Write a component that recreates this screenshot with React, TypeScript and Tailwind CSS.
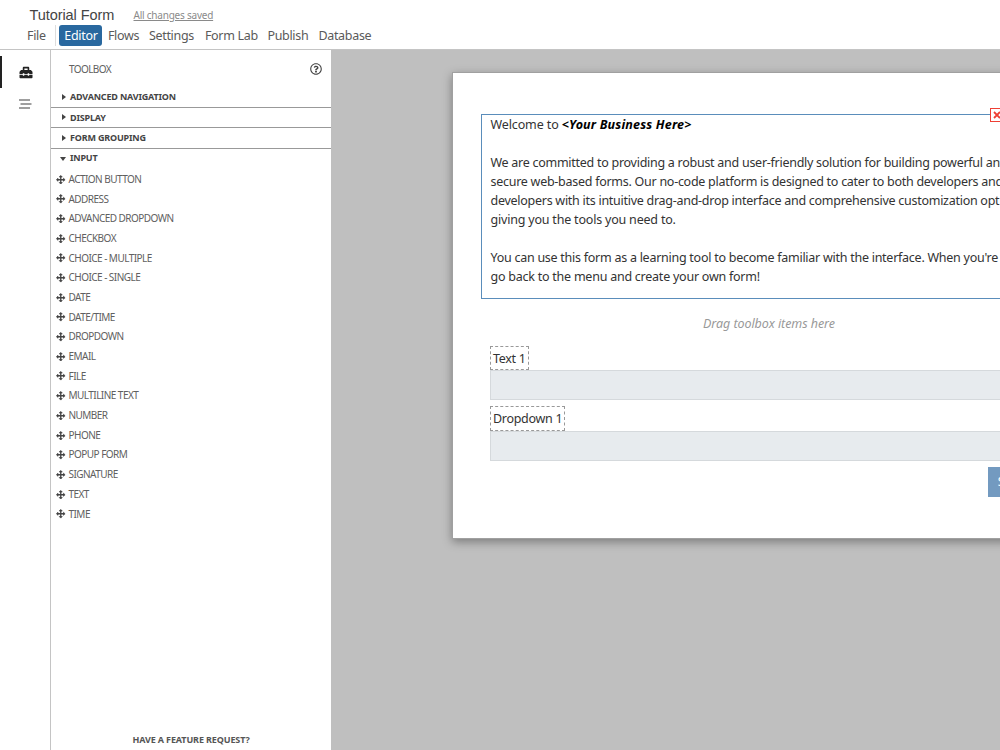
import React from 'react';
import { FaRegQuestionCircle, FaToolbox } from 'react-icons/fa';

const menuItems = [
  { label: 'Flows', className: 'ml-[5.5px] w-[31px]' },
  { label: 'Settings', className: 'ml-[10px] w-[46px]' },
  { label: 'Form Lab', className: 'ml-[10px] w-[53px]' },
  { label: 'Publish', className: 'ml-[9.5px] w-[41px]' },
  { label: 'Database', className: 'ml-[10px] w-[53px]' },
];

const collapsedGroups = ['ADVANCED NAVIGATION', 'DISPLAY', 'FORM GROUPING'];

const inputItems = [
  'ACTION BUTTON',
  'ADDRESS',
  'ADVANCED DROPDOWN',
  'CHECKBOX',
  'CHOICE - MULTIPLE',
  'CHOICE - SINGLE',
  'DATE',
  'DATE/TIME',
  'DROPDOWN',
  'EMAIL',
  'FILE',
  'MULTILINE TEXT',
  'NUMBER',
  'PHONE',
  'POPUP FORM',
  'SIGNATURE',
  'TEXT',
  'TIME',
];

function MoveIcon() {
  return (
    <svg className="mr-[3px] shrink-0 text-[#444]" width="9.5" height="9.5" viewBox="0 0 19 19">
      <path d="M9.5 3v13M3 9.5h13" stroke="currentColor" strokeWidth="2.6" />
      <path
        d="M9.5 0.8l3 3.2h-6zM9.5 18.2l3-3.2h-6zM0.8 9.5l3.2-3v6zM18.2 9.5l-3.2-3v6z"
        fill="currentColor"
        stroke="currentColor"
        strokeWidth="1.4"
        strokeLinejoin="round"
      />
    </svg>
  );
}

function Header() {
  return (
    <header className="h-[50px] shrink-0 border-b border-[#c4c4c4] bg-white">
      <div className="flex h-6 items-end pl-[29.5px]">
        <h1 className="w-[104px] font-['Liberation_Sans',sans-serif] text-[14.5px] leading-[18px] tracking-[-0.07px] text-[#444]">
          Tutorial Form
        </h1>
        <a className="pb-px text-[10px] leading-[16px] tracking-[-0.22px] text-[#8a8a8a] underline underline-offset-1">
          All changes saved
        </a>
      </div>
      <nav className="flex h-[22px] items-center pl-[27px] text-[12.5px] tracking-[-0.31px] text-[#5a5a5a]">
        <span className="w-[28px] pt-[2px]">File</span>
        <span className="h-[21px] w-px bg-[#ddd]" />
        <span className="ml-[3.4px] flex h-[21px] w-[43px] items-center justify-center rounded-[3px] bg-[#29689f] pt-[2px] text-white">
          Editor
        </span>
        {menuItems.map((item) => (
          <span key={item.label} className={`${item.className} pt-[2px] whitespace-nowrap`}>
            {item.label}
          </span>
        ))}
      </nav>
    </header>
  );
}

function Rail() {
  return (
    <aside className="w-[51px] shrink-0 border-r border-[#c4c4c4] bg-white pt-[6px]">
      <div className="flex h-8 items-center border-l-2 border-[#222] pl-[17px]">
        <FaToolbox className="h-[13px] w-[14px] text-[#222]" />
      </div>
      <div className="flex h-8 items-center pl-[19px]">
        <svg width="13" height="10" viewBox="0 0 13 10" stroke="#808080" strokeWidth="1.3">
          <path d="M0 1h11M1.5 5h11M0 9h11" />
        </svg>
      </div>
    </aside>
  );
}

function Toolbox() {
  return (
    <aside className="flex w-[280px] shrink-0 flex-col bg-white text-[#606060]">
      <div className="flex h-[37px] items-center justify-between pt-px pr-[9px] pl-[18px] text-[10px]">
        <span className="pt-px tracking-[-0.6px]">TOOLBOX</span>
        <FaRegQuestionCircle className="size-3 text-[#444]" />
      </div>
      {collapsedGroups.map((group) => (
        <div
          key={group}
          className="flex h-[20.5px] items-center border-b border-[#999] pl-[11px] text-[9px] font-bold tracking-[-0.18px] text-[#444]"
        >
          <svg className="mr-1" width="4" height="6" viewBox="0 0 4 6" fill="currentColor">
            <path d="M0 0l4 3-4 3z" />
          </svg>
          {group}
        </div>
      ))}
      <div className="flex h-[19px] items-center pl-[9px] text-[9px] font-bold tracking-[-0.2px] text-[#444]">
        <svg className="mt-px mr-1" width="6" height="4" viewBox="0 0 6 4" fill="currentColor">
          <path d="M0 0h6l-3 4z" />
        </svg>
        INPUT
      </div>
      <ul className="pt-[2px]">
        {inputItems.map((item) => (
          <li key={item} className="flex h-[19.7px] items-center pl-[5px] text-[10px] tracking-[-0.54px]">
            <MoveIcon />
            {item}
          </li>
        ))}
      </ul>
      <div className="mt-auto pb-1 text-center text-[9px] leading-[13px] font-bold tracking-[-0.12px] text-[#555]">
        HAVE A FEATURE REQUEST?
      </div>
    </aside>
  );
}

interface FieldProps {
  label: string;
  className: string;
}

function Field({ label, className }: FieldProps) {
  return (
    <div className={className}>
      <div className="flex h-[24.5px] w-fit items-center border border-dashed border-[#999] px-[2px] tracking-[-0.3px] whitespace-nowrap">
        {label}
      </div>
      <div className="h-[30px] border border-[#d5d9dc] bg-[#e7ebee]" />
    </div>
  );
}

function FormCanvas() {
  return (
    <main className="flex-1 overflow-hidden bg-[#bfbfbf] pt-[22px] pl-[121px]">
      <section className="h-[467px] w-[634px] border border-[#a0a0a0] bg-white px-[28px] pt-[41px] text-[12.5px] leading-[19px] tracking-[-0.2px] text-[#333] shadow-[0_3px_9px_rgba(0,0,0,0.35)]">
        <div className="relative h-[185px] border border-[#5a8dbb] pl-[8.5px]">
          <button className="absolute -top-[7px] left-[508px] flex h-[14px] w-[14px] items-center justify-center border border-[#ee4035] bg-white">
            <svg width="8" height="8" viewBox="0 0 8 8" stroke="#ee4035" strokeWidth="1.8">
              <path d="M1 1l6 6M7 1l-6 6" />
            </svg>
          </button>
          <p className="tracking-[-0.12px] whitespace-nowrap">
            Welcome to <b className="tracking-[0.17px] text-black italic">&lt;Your Business Here&gt;</b>
          </p>
          <p className="mt-[19px] whitespace-nowrap">
            <span className="tracking-[-0.27px]">
              We are committed to providing a robust and user-friendly solution for building powerful an
              <br />
              secure web-based forms. Our no-code platform is designed to cater to both developers and
              <br />
              developers with its intuitive drag-and-drop interface and comprehensive customization opt
            </span>
            <br />
            giving you the tools you need to.
          </p>
          <p className="mt-[19px] whitespace-nowrap">
            <span className="tracking-[-0.26px]">
              You can use this form as a learning tool to become familiar with the interface. When you're
            </span>
            <br />
            <span className="tracking-[-0.24px]">go back to the menu and create your own form!</span>
          </p>
        </div>
        <div className="mt-[14.5px] w-full text-center tracking-[-0.06px] text-[#999] italic">
          Drag toolbox items here
        </div>
        <Field label="Text 1" className="mt-[13.3px] px-[9px]" />
        <Field label="Dropdown 1" className="mt-[6.2px] px-[9px]" />
        <div className="mt-[6px] flex justify-end pr-[9px]">
          <button className="h-[30px] w-[60px] bg-[#739ac0] text-white">Submit</button>
        </div>
      </section>
    </main>
  );
}

export default function App() {
  return (
    <div className="flex h-screen w-full flex-col overflow-hidden font-['Noto_Sans',sans-serif]">
      <Header />
      <div className="flex min-h-0 flex-1">
        <Rail />
        <Toolbox />
        <FormCanvas />
      </div>
    </div>
  );
}
